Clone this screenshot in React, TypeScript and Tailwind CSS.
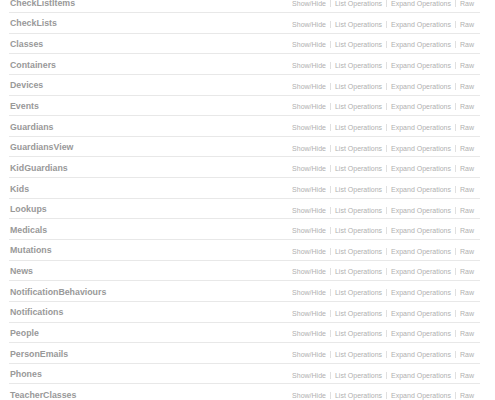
import React from 'react';

const resources = [
  'CheckListItems',
  'CheckLists',
  'Classes',
  'Containers',
  'Devices',
  'Events',
  'Guardians',
  'GuardiansView',
  'KidGuardians',
  'Kids',
  'Lookups',
  'Medicals',
  'Mutations',
  'News',
  'NotificationBehaviours',
  'Notifications',
  'People',
  'PersonEmails',
  'Phones',
  'TeacherClasses',
];

const options = ['Show/Hide', 'List Operations', 'Expand Operations', 'Raw'];

const App: React.FC = () => {
  return (
    <div className="w-[495px] h-[400px] overflow-hidden bg-white font-['Liberation_Sans',Arial,sans-serif]">
      <ul className="ml-[9px] mr-[15px] -mt-[7.7px]">
        {resources.map(name => (
          <li
            key={name}
            className="h-[20.65px] border-b border-[#e8e8e8] flex items-center justify-between"
          >
            {/* Resource heading */}
            <h2 className="pl-[1px] pt-[2px] text-[8.8px] font-bold text-[#999] leading-none">{name}</h2>

            {/* Options */}
            <ul className="flex items-center pt-[3px] pr-[1px]">
              {options.map((opt, i) => (
                <li
                  key={opt}
                  className={
                    i < options.length - 1
                      ? 'px-[4px] border-r border-[#e0e0e0] text-[7px] leading-[7px] text-[#b0b0b0]'
                      : 'pl-[4px] pr-[5px] text-[7px] leading-[7px] text-[#b0b0b0]'
                  }
                >
                  {opt}
                </li>
              ))}
            </ul>
          </li>
        ))}
      </ul>
    </div>
  );
};

export default App;
